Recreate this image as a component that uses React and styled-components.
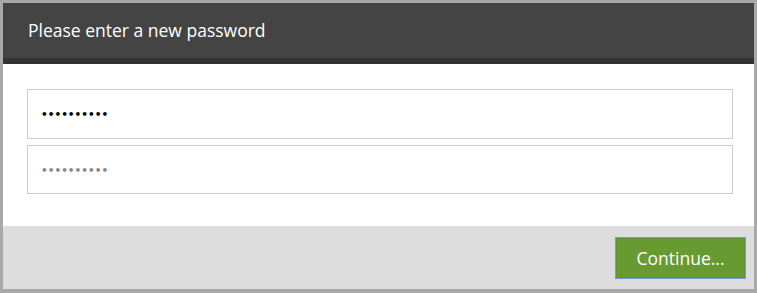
import React, { useState } from "react";
import styled, { createGlobalStyle } from "styled-components";

const GlobalStyle = createGlobalStyle`
  html, body {
    margin: 0;
    padding: 0;
    background: #fff;
  }
  * {
    box-sizing: border-box;
  }
`;

const Dialog = styled.div`
  width: 757px;
  height: 293px;
  border: 3px solid #a8a8a8;
  border-bottom-width: 4px;
  display: flex;
  flex-direction: column;
  font-family: "Open Sans", "Noto Sans", sans-serif;
  background: #fff;
`;

const Header = styled.div`
  height: 61px;
  background-color: #444444;
  border-bottom: 6px solid #333333;
  color: #fff;
  font-size: 17.5px;
  padding: 16px 25px 0 25px;
  line-height: 22px;
`;

const Body = styled.div`
  flex: 1;
  display: flex;
  flex-direction: column;
  gap: 6px;
  padding: 25px 21px 0 24px;
`;

const Field = styled.input`
  width: 100%;
  height: ${(p) => p.$h}px;
  border: 1px solid #cccccc;
  padding: 0 13px;
  font-family: "DejaVu Sans", sans-serif;
  font-size: 10.5px;
  font-weight: bold;
  color: #000;
  outline: none;
  background: #fff;

  &::placeholder {
    color: #8a8a8a;
  }
`;

const Footer = styled.div`
  height: 63px;
  background-color: #dddddd;
  display: flex;
  justify-content: flex-end;
  align-items: flex-start;
  padding: 11px 8px 0 0;
`;

const Button = styled.button`
  width: 131px;
  height: 42px;
  background-color: #679a31;
  border: 1px solid #6d9fd6;
  box-shadow: inset 0 0 0 1px #5f9340;
  color: #fff;
  font-family: "Open Sans", "Noto Sans", sans-serif;
  font-size: 17.5px;
  cursor: pointer;
  padding: 0;
`;

const App = () => {
  const [pw, setPw] = useState("abcdefghij");
  const [again, setAgain] = useState("");

  return (
    <>
      <GlobalStyle />
      <Dialog>
        <Header>Please enter a new password</Header>
        <Body>
          <Field
            $h={50}
            type="password"
            value={pw}
            onChange={(e) => setPw(e.target.value)}
          />
          <Field
            $h={49}
            type="password"
            placeholder="••••••••••"
            value={again}
            onChange={(e) => setAgain(e.target.value)}
          />
        </Body>
        <Footer>
          <Button>Continue...</Button>
        </Footer>
      </Dialog>
    </>
  );
};

export default App;
